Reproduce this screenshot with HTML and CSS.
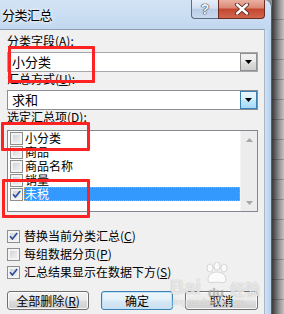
FILE: index.html
```html
<!DOCTYPE html>
<html lang="zh-CN">
<head>
<meta charset="utf-8">
<title>分类汇总</title>
<link rel="stylesheet" href="styles.css">
</head>
<body>
<div class="screen">
  <div class="window">
    <div class="titlebar">
      <span class="title">分类汇总</span>
      <div class="caption-btns">
        <div class="cb help">?</div>
        <div class="cb close">
          <svg width="16" height="12" viewBox="0 0 16 12"><path d="M3 1.5 L13 10.5 M13 1.5 L3 10.5" stroke="#5a2a22" stroke-width="4.2" stroke-linecap="round"/><path d="M3 1.5 L13 10.5 M13 1.5 L3 10.5" stroke="#ffffff" stroke-width="2.4" stroke-linecap="round"/></svg>
        </div>
      </div>
    </div>
    <div class="body">
      <div class="client">
        <div class="label">分类字段(<u>A</u>):</div>
        <div class="combo">
          <span class="combo-text">小分类</span>
          <span class="combo-btn"><svg width="7" height="4" viewBox="0 0 7 4"><polygon points="0,0 7,0 3.5,4" fill="#000"/></svg></span>
        </div>
        <div class="label">汇总方式(<u>U</u>):</div>
        <div class="combo combo2">
          <span class="combo-text">求和</span>
          <span class="combo-btn hot"><svg width="7" height="4" viewBox="0 0 7 4"><polygon points="0,0 7,0 3.5,4" fill="#000"/></svg></span>
        </div>
        <div class="label label3">选定汇总项(<u>D</u>):</div>
        <div class="listbox">
          <div class="items">
            <div class="item"><span class="cbx"></span><span class="itext">小分类</span></div>
            <div class="item"><span class="cbx"></span><span class="itext">商品</span></div>
            <div class="item"><span class="cbx"></span><span class="itext">商品名称</span></div>
            <div class="item"><span class="cbx"></span><span class="itext">销量</span></div>
            <div class="item"><span class="cbx"><svg width="11" height="11" viewBox="0 0 11 11"><path d="M2 5.2 L4.4 8 L9.2 2" fill="none" stroke="#2f4d9c" stroke-width="1.7"/></svg></span><span class="itext sel">未税</span></div>
          </div>
          <div class="scrollbar">
            <svg width="7" height="4" viewBox="0 0 7 4"><polygon points="3.5,0 7,4 0,4" fill="#a6a6a6"/></svg>
            <svg width="7" height="4" viewBox="0 0 7 4"><polygon points="0,0 7,0 3.5,4" fill="#a6a6a6"/></svg>
          </div>
        </div>
        <div class="options">
          <div class="opt"><span class="cbx"><svg width="11" height="11" viewBox="0 0 11 11"><path d="M2 5.2 L4.4 8 L9.2 2" fill="none" stroke="#2f4d9c" stroke-width="1.7"/></svg></span><span>替换当前分类汇总(<u>C</u>)</span></div>
          <div class="opt"><span class="cbx"></span><span>每组数据分页(<u>P</u>)</span></div>
          <div class="opt"><span class="cbx"><svg width="11" height="11" viewBox="0 0 11 11"><path d="M2 5.2 L4.4 8 L9.2 2" fill="none" stroke="#2f4d9c" stroke-width="1.7"/></svg></span><span>汇总结果显示在数据下方(<u>S</u>)</span></div>
        </div>
        <div class="buttons">
          <div class="btn w1">全部删除(<u>R</u>)</div>
          <div class="btn w2 default">确定</div>
          <div class="btn w3">取消</div>
        </div>
      </div>
      <div class="frame-r"></div>
    </div>
  </div>
  <div class="backdrop"></div>

  <div class="watermark">
    <svg class="paw" width="26" height="22" viewBox="0 0 26 22"><g fill="rgba(255,255,255,0.75)" stroke="rgba(150,150,150,0.45)" stroke-width="0.8"><ellipse cx="6" cy="6" rx="3" ry="4"/><ellipse cx="13" cy="4" rx="3" ry="4"/><ellipse cx="20" cy="6" rx="3" ry="4"/><path d="M4 18 C4 12 9 10 13 10 C17 10 22 12 22 18 C22 21 18 21 13 20 C8 21 4 21 4 18 Z"/></g></svg>
    <span class="wm-main">Bai</span><span class="wm-du">du</span><span class="wm-cn">经验</span>
    <div class="wm-url">jingyan.baidu.com</div>
  </div>

  <div class="mark m1"></div>
  <div class="mark m2"></div>
  <div class="mark m3"></div>
</div>
</body>
</html>
```

FILE: styles.css
```css
html, body {
  margin: 0;
  padding: 0;
}
body {
  width: 284px;
  height: 314px;
  overflow: hidden;
  font-family: "Noto Sans CJK SC", "Liberation Sans", sans-serif;
  color: #000;
}
.screen {
  position: relative;
  display: flex;
  width: 284px;
  height: 314px;
  background: #8e8e8e;
}
.window {
  width: 272px;
  height: 314px;
  display: flex;
  flex-direction: column;
  box-sizing: border-box;
  border-right: 1px solid #4f5f72;
  border-top-right-radius: 8px;
  background: #c3d9f0;
  overflow: hidden;
}
.titlebar {
  height: 29px;
  flex: none;
  display: flex;
  justify-content: space-between;
  align-items: flex-start;
  padding-right: 6px;
  background: linear-gradient(#d3e3f5, #c2d8f0);
}
.title {
  font-size: 13px;
  line-height: 13px;
  margin: 8px 0 0 2px;
  letter-spacing: -0.5px;
  text-shadow: 0 0 3px #fff, 0 0 5px #fff;
}
.caption-btns {
  display: flex;
}
.cb {
  height: 19px;
  box-sizing: border-box;
  border: 1px solid #5b6e86;
  border-top: none;
  display: flex;
  align-items: center;
  justify-content: center;
}
.help {
  width: 27px;
  border-right: none;
  border-bottom-left-radius: 4px;
  background: linear-gradient(#e6eef8 0%, #d2e0f0 45%, #b9cde5 52%, #c9daee 100%);
  font-family: "Liberation Sans", sans-serif;
  font-weight: bold;
  font-size: 14px;
  color: #f4f6f9;
  text-shadow: 0 0 1px #2a3444, 0 0 1px #2a3444, 0 0 1px #2a3444;
}
.close {
  width: 47px;
  border-color: #6d2c22;
  border-bottom-right-radius: 4px;
  background: linear-gradient(#eab0a2 0%, #dc8a78 42%, #c5472f 52%, #d1664e 100%);
}
.body {
  flex: 1;
  display: flex;
}
.client {
  width: 265px;
  flex: none;
  box-sizing: border-box;
  background: #f0f0f0;
  border-top: 1px solid #8d9db1;
  border-right: 1px solid #a9b6c5;
  padding: 4px 6px 0 7px;
  display: flex;
  flex-direction: column;
}
.frame-r {
  flex: 1;
  background: linear-gradient(to right, #cfe2f6, #b7cfea);
}
.label {
  font-size: 12px;
  line-height: 14px;
  height: 14px;
  white-space: nowrap;
}
.combo {
  height: 20px;
  margin-top: 4px;
  box-sizing: border-box;
  border: 1px solid #a5a7ac;
  background: #fff;
  display: flex;
  align-items: center;
  justify-content: space-between;
}
.combo2 {
  border-color: #8a8d93;
}
.combo-text {
  font-size: 13px;
  line-height: 16px;
  padding-left: 4px;
}
.combo-btn {
  width: 17px;
  height: 18px;
  box-sizing: border-box;
  border: 1px solid #8e8f8f;
  background: linear-gradient(#f2f2f2 0%, #ebebeb 45%, #dddddd 55%, #cfcfcf 100%);
  display: flex;
  align-items: center;
  justify-content: center;
}
.combo-btn.hot {
  border-color: #3c7fb1;
  background: linear-gradient(#eaf6fd 0%, #d9f0fc 45%, #bee6fd 55%, #a7d9f5 100%);
}
.label3 {
  margin-top: 0;
}
.listbox {
  height: 82px;
  margin-top: 6px;
  box-sizing: border-box;
  border: 1px solid #828790;
  background: #fff;
  display: flex;
}
.items {
  flex: 1;
  display: flex;
  flex-direction: column;
}
.item {
  height: 14px;
  display: flex;
  align-items: center;
  padding-left: 2px;
}
.itext {
  font-size: 12px;
  line-height: 14px;
  height: 14px;
  margin-left: 1px;
  padding-left: 1px;
  white-space: nowrap;
}
.itext.sel {
  flex: 1;
  background: #3399ff;
  color: #fff;
  box-sizing: border-box;
  outline: 1px dotted #d9a04a;
  outline-offset: -1px;
}
.scrollbar {
  width: 17px;
  flex: none;
  background: #ececec;
  border-left: 1px solid #f4f4f4;
  box-sizing: border-box;
  display: flex;
  flex-direction: column;
  align-items: center;
  justify-content: space-between;
  padding: 7px 0 6px;
}
.cbx {
  width: 13px;
  height: 13px;
  flex: none;
  box-sizing: border-box;
  border: 1px solid #8e8f8f;
  background: linear-gradient(135deg, #c9cdd2, #f7f7f7);
  box-shadow: inset 0 0 0 2px #f3f3f3;
  display: flex;
  align-items: center;
  justify-content: center;
}
.options {
  margin-top: 15px;
  display: flex;
  flex-direction: column;
}
.opt {
  height: 18px;
  display: flex;
  align-items: center;
  gap: 4px;
  font-size: 12px;
  line-height: 14px;
  white-space: nowrap;
}
.buttons {
  margin-top: 10px;
  display: flex;
  gap: 12px;
}
.btn {
  height: 19px;
  box-sizing: border-box;
  border: 1px solid #707070;
  border-radius: 3px;
  background: linear-gradient(#f2f2f2 0%, #ebebeb 45%, #dddddd 55%, #cfcfcf 100%);
  box-shadow: inset 0 0 0 1px rgba(255,255,255,0.8);
  font-size: 12px;
  line-height: 17px;
  text-align: center;
  white-space: nowrap;
}
.w1 { width: 82px; }
.w2 { width: 72px; }
.w3 { width: 73px; }
.btn.default {
  border-color: #3c7fb1;
  box-shadow: inset 0 0 0 1px #bfe3f8;
  background: linear-gradient(#eef6fb 0%, #e4f0f8 45%, #d6e8f4 55%, #c9def0 100%);
}
.backdrop {
  flex: 1;
  background:
    repeating-linear-gradient(to bottom, transparent 0 19px, rgba(0,0,0,0.22) 19px 20px),
    linear-gradient(to right, #3a3a3a 0%, #5c5c5c 25%, #9a9a9a 65%, #c4c4c4 100%);
}
.mark {
  position: absolute;
  box-sizing: border-box;
  border: 3px solid #ff2222;
  border-radius: 1px;
}
.m1 { left: 8px; top: 46px; width: 87px; height: 37px; }
.m2 { left: 1px; top: 122px; width: 89px; height: 29px; }
.m3 { left: 2px; top: 179px; width: 88px; height: 39px; }
.watermark {
  position: absolute;
  left: 168px;
  top: 262px;
  width: 100px;
  height: 46px;
  pointer-events: none;
}
.paw {
  position: absolute;
  left: 36px;
  top: 0;
}
.wm-main, .wm-du, .wm-cn {
  position: absolute;
  top: 14px;
  font-family: "Liberation Sans", sans-serif;
  font-weight: bold;
  font-size: 20px;
  line-height: 22px;
  color: rgba(255,255,255,0.7);
  text-shadow: 0 0 1px rgba(110,110,110,0.55);
}
.wm-main { left: 2px; }
.wm-du { left: 40px; font-size: 13px; top: 20px; color: rgba(200,200,200,0.35); }
.wm-cn {
  left: 62px;
  font-family: "Noto Sans CJK SC", sans-serif;
  font-size: 15px;
  top: 16px;
}
.wm-url {
  position: absolute;
  left: 4px;
  top: 35px;
  font-family: "Liberation Sans", sans-serif;
  font-size: 9px;
  line-height: 10px;
  color: rgba(255,255,255,0.7);
  text-shadow: 0 0 1px rgba(110,110,110,0.5);
  white-space: nowrap;
}
```
